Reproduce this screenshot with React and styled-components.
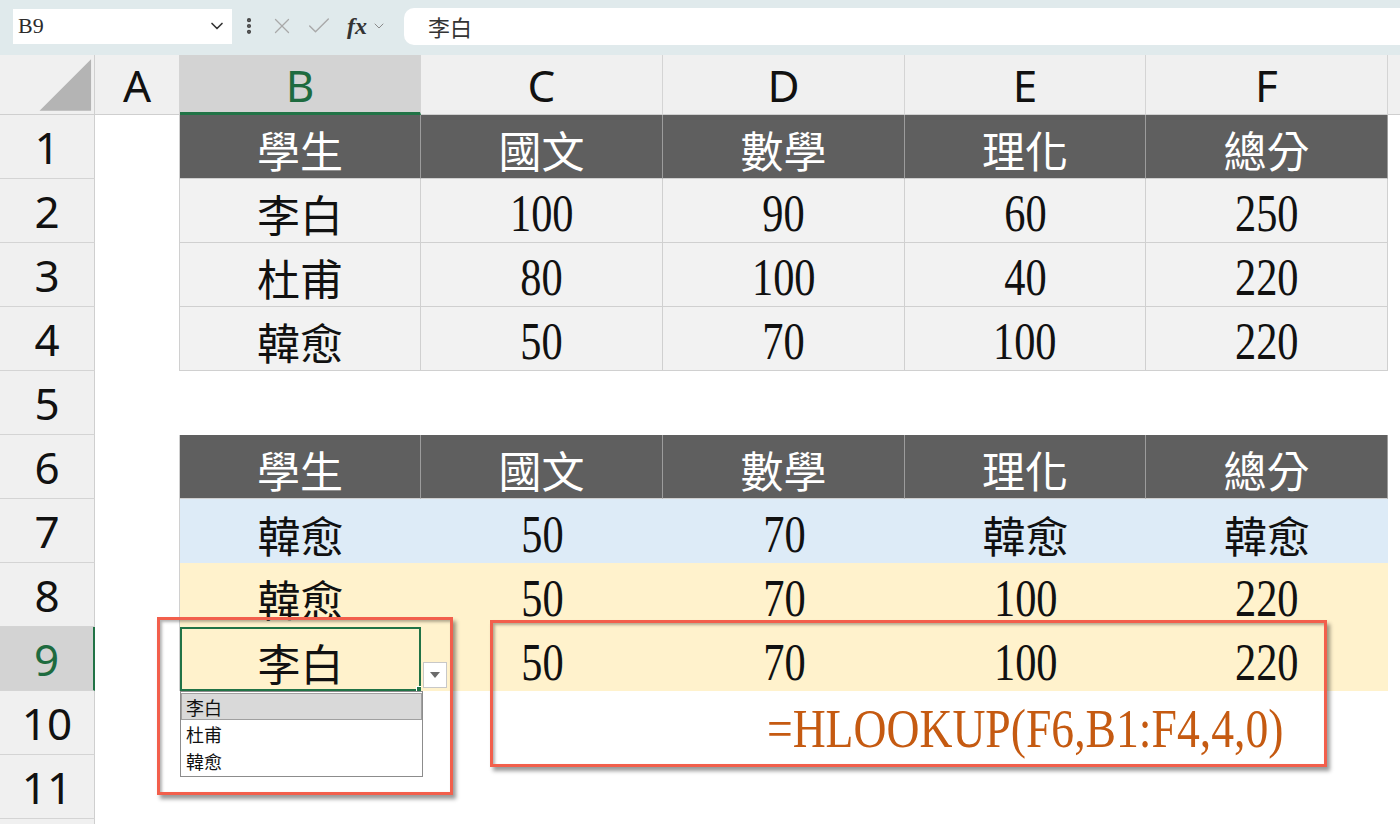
import React from "react";
import styled, { createGlobalStyle } from "styled-components";
import { ChevronDown, X, Check, EllipsisVertical } from "lucide-react";

const GlobalStyle = createGlobalStyle`
	html, body {
		margin: 0;
		padding: 0;
		background: #ffffff;
		overflow: hidden;
	}
	body {
		font-family: "Noto Sans", "Noto Sans CJK TC", sans-serif;
	}
`;

const CJK = `"Noto Sans CJK TC", "Noto Sans CJK SC", sans-serif`;

const columns = ["A", "B", "C", "D", "E", "F"];

const rows = [
	{ tone: "head", values: ["學生", "國文", "數學", "理化", "總分"] },
	{ tone: "gray", values: ["李白", 100, 90, 60, 250] },
	{ tone: "gray", values: ["杜甫", 80, 100, 40, 220] },
	{ tone: "gray", values: ["韓愈", 50, 70, 100, 220] },
	{ tone: null },
	{ tone: "head", values: ["學生", "國文", "數學", "理化", "總分"] },
	{ tone: "blue", values: ["韓愈", 50, 70, "韓愈", "韓愈"] },
	{ tone: "yellow", values: ["韓愈", 50, 70, 100, 220] },
	{ tone: "yellow", values: ["李白", 50, 70, 100, 220], selected: true },
	{ tone: null, formula: "=HLOOKUP(F6,B1:F4,4,0)" },
	{ tone: null },
];

export default function App() {
	return (
		<>
			<GlobalStyle />
			<FormulaBar>
				<NameBox>
					<span>B9</span>
					<ChevronDown size={20} strokeWidth={2} color='#333' />
				</NameBox>
				<BarIcons>
					<EllipsisVertical size={20} strokeWidth={3} color='#444' />
					<X size={26} strokeWidth={1.2} color='#a9a9a9' />
					<Check size={28} strokeWidth={1.2} color='#a9a9a9' />
					<Fx>fx</Fx>
					<ChevronDown size={16} strokeWidth={1.5} color='#8a8a8a' />
				</BarIcons>
				<FormulaInput>李白</FormulaInput>
			</FormulaBar>

			<Sheet>
				<Corner>
					<svg width='95' height='60' viewBox='0 0 95 60'>
						<polygon points='40,56 92,4 92,56' fill='#b4b4b4' />
					</svg>
				</Corner>
				{columns.map((c) => (
					<ColHead key={c} $active={c === "B"}>
						{c}
					</ColHead>
				))}
				<ColHead $tail />

				{rows.map((row, i) => (
					<React.Fragment key={i}>
						<RowHead $active={i === 8}>{i + 1}</RowHead>
						<Blank $edge={!!row.tone} />
						{[0, 1, 2, 3, 4].map((j) => {
							const v = row.values ? row.values[j] : null;
							return (
								<Cell
									key={j}
									$tone={row.tone}
									$selected={row.selected && j === 0}>
									{v === null ? null : typeof v === "number" ? (
										<Num>{v}</Num>
									) : (
										<Han $light={row.tone === "head"}>{v}</Han>
									)}
									{row.formula && j === 3 && <Formula>{row.formula}</Formula>}
									{row.selected && j === 0 && <FillHandle />}
								</Cell>
							);
						})}
						<Blank />
					</React.Fragment>
				))}
				<RowHead $stub />

				<DropButton>
					<svg width='10' height='6' viewBox='0 0 10 6'>
						<polygon points='0,0 10,0 5,6' fill='#6b6b6b' />
					</svg>
				</DropButton>
				<DropList>
					<DropItem $current>李白</DropItem>
					<DropItem>杜甫</DropItem>
					<DropItem>韓愈</DropItem>
				</DropList>

				<Highlight $left={157} $top={562} $width={296} $height={178} />
				<Highlight $left={490} $top={565} $width={837} $height={147} />
			</Sheet>
		</>
	);
}

const FormulaBar = styled.header`
	height: 55px;
	box-sizing: border-box;
	background: #e0eaec;
	display: flex;
	align-items: center;
	padding: 0 0 3px 13px;
`;

const NameBox = styled.div`
	width: 219px;
	height: 35px;
	box-sizing: border-box;
	background: #ffffff;
	display: flex;
	align-items: center;
	justify-content: space-between;
	padding: 0 5px 0 5px;
	font-family: "Liberation Serif", serif;
	font-size: 22px;
	color: #2b2b2b;
`;

const BarIcons = styled.div`
	display: flex;
	align-items: center;
	gap: 10px;
	margin-left: 7px;
	width: 165px;
`;

const Fx = styled.span`
	font-family: "Liberation Serif", serif;
	font-style: italic;
	font-weight: 700;
	font-size: 24px;
	color: #333;
	margin-left: 4px;
	margin-right: -6px;
`;

const FormulaInput = styled.div`
	flex: 1;
	height: 37px;
	background: #ffffff;
	border-radius: 10px 0 0 10px;
	display: flex;
	align-items: center;
	padding-left: 24px;
	font-family: ${CJK};
	font-size: 22px;
	color: #333;
`;

const Sheet = styled.main`
	position: relative;
	display: grid;
	grid-template-columns: 95px 85px 241px 242px 242px 241px 242px 1fr;
	grid-template-rows: 60px repeat(11, 64px) 10px;
	font-family: "Liberation Serif", ${CJK};
`;

const Corner = styled.div`
	background: #f0f0f0;
	border-right: 1px solid #d0d0d0;
	border-bottom: 1px solid #cfcfcf;
	box-sizing: border-box;
	display: flex;
	svg {
		display: block;
	}
`;

const ColHead = styled.div`
	box-sizing: border-box;
	background: ${(p) => (p.$active ? "#d3d3d3" : "#f0f0f0")};
	color: ${(p) => (p.$active ? "#1e6b3f" : "#111")};
	border-right: ${(p) => (p.$tail ? "none" : "1px solid #d4d4d4")};
	border-bottom: ${(p) => (p.$active ? "3px solid #217346" : "1px solid #cfcfcf")};
	display: flex;
	align-items: center;
	justify-content: center;
	padding-top: ${(p) => (p.$active ? "3px" : "0")};
	font-family: "Noto Sans", sans-serif;
	font-size: 44px;
`;

const RowHead = styled.div`
	box-sizing: border-box;
	background: ${(p) => (p.$active ? "#d3d3d3" : "#f0f0f0")};
	color: ${(p) => (p.$active ? "#1e6b3f" : "#111")};
	border-bottom: ${(p) => (p.$stub ? "none" : "1px solid #d4d4d4")};
	border-right: ${(p) => (p.$active ? "2px solid #217346" : "1px solid #cfcfcf")};
	display: flex;
	align-items: center;
	justify-content: center;
	font-family: "Noto Sans", sans-serif;
	font-size: 44px;
`;

const Blank = styled.div`
	background: #ffffff;
	box-sizing: border-box;
	border-right: ${(p) => (p.$edge ? "1px solid #d0d0d0" : "none")};
`;

const toneBg = {
	head: "#5f5f5f",
	gray: "#f2f2f2",
	blue: "#ddebf7",
	yellow: "#fff2cc",
};

const Cell = styled.div`
	position: relative;
	box-sizing: border-box;
	background: ${(p) => toneBg[p.$tone] || "#ffffff"};
	display: flex;
	align-items: center;
	justify-content: center;
	padding-top: 6px;
	overflow: visible;
	white-space: nowrap;
	${(p) =>
		p.$tone === "head" &&
		`border-right: 1px solid #9c9c9c; border-bottom: 1px solid #cfcfcf;`}
	${(p) =>
		p.$tone === "gray" &&
		`border-right: 1px solid #d0d0d0; border-bottom: 1px solid #d0d0d0;`}
	${(p) => p.$selected && `box-shadow: inset 0 0 0 2px #217346;`}
`;

const Han = styled.span`
	font-family: ${CJK};
	font-size: 43px;
	line-height: 1;
	color: ${(p) => (p.$light ? "#ffffff" : "#111")};
`;

const Num = styled.span`
	display: inline-block;
	font-family: "Liberation Serif", serif;
	font-size: 53px;
	line-height: 1;
	color: #111;
	transform: scaleX(0.8);
`;

const Formula = styled.span`
	position: relative;
	z-index: 2;
	display: inline-block;
	font-family: "Liberation Serif", serif;
	font-size: 55px;
	line-height: 1;
	color: #c55a11;
	transform: scaleX(0.83);
	margin-top: 4px;
`;

const FillHandle = styled.span`
	position: absolute;
	right: -3px;
	bottom: -3px;
	width: 6px;
	height: 6px;
	background: #217346;
	border: 1px solid #ffffff;
`;

const DropButton = styled.div`
	position: absolute;
	left: 423px;
	top: 607px;
	width: 24px;
	height: 26px;
	box-sizing: border-box;
	background: #ffffff;
	border: 1px solid #c8c8c8;
	display: flex;
	align-items: center;
	justify-content: center;
`;

const DropList = styled.ul`
	position: absolute;
	z-index: 3;
	left: 180px;
	top: 636px;
	width: 243px;
	height: 86px;
	box-sizing: border-box;
	margin: 0;
	padding: 1px 0 0;
	list-style: none;
	background: #ffffff;
	border: 1px solid #8c8c8c;
	font-family: ${CJK};
	font-size: 18px;
	color: #111;
`;

const DropItem = styled.li`
	box-sizing: border-box;
	height: 27px;
	padding-left: 5px;
	display: flex;
	align-items: center;
	background: ${(p) => (p.$current ? "#d9d9d9" : "transparent")};
	box-shadow: ${(p) => (p.$current ? "inset 0 0 0 1px #a0a0a0" : "none")};
	line-height: 26px;
`;

const Highlight = styled.div`
	position: absolute;
	z-index: 4;
	left: ${(p) => p.$left}px;
	top: ${(p) => p.$top}px;
	width: ${(p) => p.$width}px;
	height: ${(p) => p.$height}px;
	box-sizing: border-box;
	border: 3px solid #f25f4c;
	box-shadow: 3px 4px 4px rgba(0, 0, 0, 0.4), inset 2px 2px 3px rgba(0, 0, 0, 0.3);
	pointer-events: none;
`;
